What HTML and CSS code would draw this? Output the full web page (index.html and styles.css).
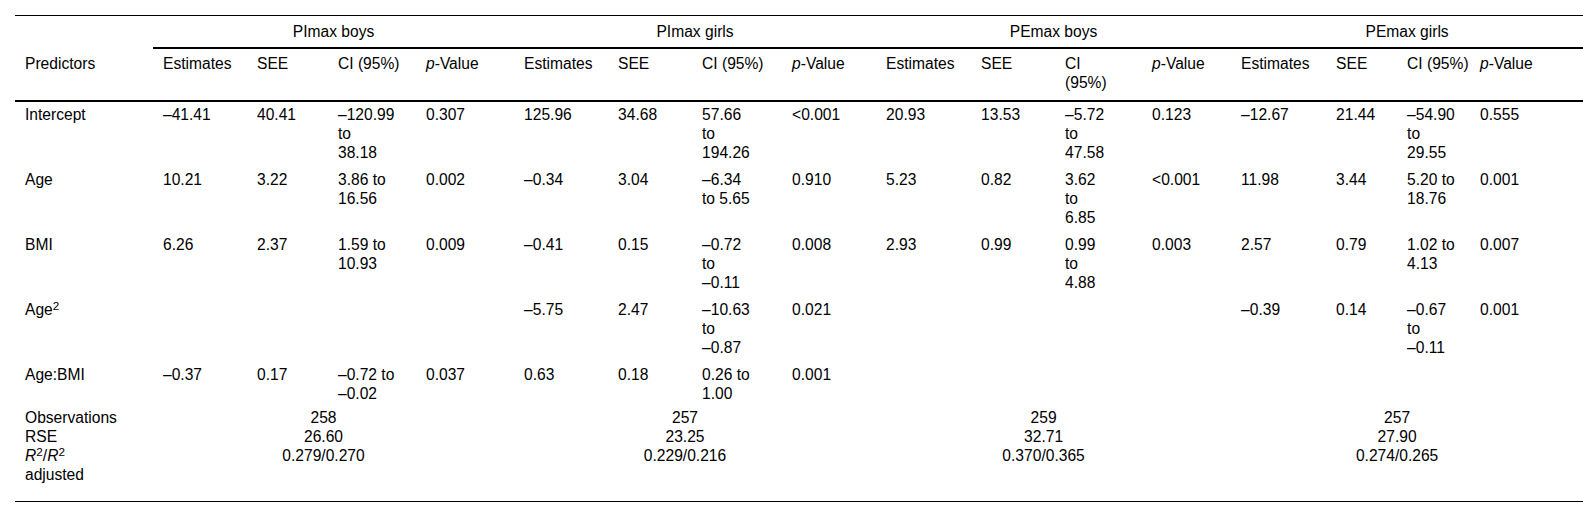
FILE: index.html
```html
<!DOCTYPE html>
<html lang="en">
<head>
<meta charset="utf-8">
<title>Regression table</title>
<link rel="stylesheet" href="styles.css">
</head>
<body>
<div class="page">
<table class="tbl">
<colgroup>
<col class="c138">
<col class="c94"><col class="c81"><col class="c88"><col class="c98">
<col class="c94"><col class="c84"><col class="c90"><col class="c94">
<col class="c95"><col class="c84"><col class="c87"><col class="c89">
<col class="c95"><col class="c71"><col class="c73"><col class="c113">
</colgroup>
<thead>
<tr class="grp">
<th></th>
<th class="grp-h" colspan="4">PImax boys</th>
<th class="grp-h" colspan="4">PImax girls</th>
<th class="grp-h" colspan="4">PEmax boys</th>
<th class="grp-h" colspan="4">PEmax girls</th>
</tr>
<tr class="cols">
<th>Predictors</th>
<th>Estimates</th><th>SEE</th><th>CI (95%)</th><th><i>p</i>-Value</th>
<th>Estimates</th><th>SEE</th><th>CI (95%)</th><th><i>p</i>-Value</th>
<th>Estimates</th><th>SEE</th><th>CI<br>(95%)</th><th><i>p</i>-Value</th>
<th>Estimates</th><th>SEE</th><th>CI (95%)</th><th><i>p</i>-Value</th>
</tr>
</thead>
<tbody>
<tr>
<td>Intercept</td>
<td>–41.41</td><td>40.41</td><td>–120.99<br>to<br>38.18</td><td>0.307</td>
<td>125.96</td><td>34.68</td><td>57.66<br>to<br>194.26</td><td>&lt;0.001</td>
<td>20.93</td><td>13.53</td><td>–5.72<br>to<br>47.58</td><td>0.123</td>
<td>–12.67</td><td>21.44</td><td>–54.90<br>to<br>29.55</td><td>0.555</td>
</tr>
<tr>
<td>Age</td>
<td>10.21</td><td>3.22</td><td>3.86 to<br>16.56</td><td>0.002</td>
<td>–0.34</td><td>3.04</td><td>–6.34<br>to 5.65</td><td>0.910</td>
<td>5.23</td><td>0.82</td><td>3.62<br>to<br>6.85</td><td>&lt;0.001</td>
<td>11.98</td><td>3.44</td><td>5.20 to<br>18.76</td><td>0.001</td>
</tr>
<tr>
<td>BMI</td>
<td>6.26</td><td>2.37</td><td>1.59 to<br>10.93</td><td>0.009</td>
<td>–0.41</td><td>0.15</td><td>–0.72<br>to<br>–0.11</td><td>0.008</td>
<td>2.93</td><td>0.99</td><td>0.99<br>to<br>4.88</td><td>0.003</td>
<td>2.57</td><td>0.79</td><td>1.02 to<br>4.13</td><td>0.007</td>
</tr>
<tr>
<td>Age<sup class="sup">2</sup></td>
<td></td><td></td><td></td><td></td>
<td>–5.75</td><td>2.47</td><td>–10.63<br>to<br>–0.87</td><td>0.021</td>
<td></td><td></td><td></td><td></td>
<td>–0.39</td><td>0.14</td><td>–0.67<br>to<br>–0.11</td><td>0.001</td>
</tr>
<tr>
<td>Age:BMI</td>
<td>–0.37</td><td>0.17</td><td>–0.72 to<br>–0.02</td><td>0.037</td>
<td>0.63</td><td>0.18</td><td>0.26 to<br>1.00</td><td>0.001</td>
<td></td><td></td><td></td><td></td>
<td></td><td></td><td></td><td></td>
</tr>
<tr class="sum sum-first">
<td>Observations</td>
<td class="val" colspan="4">258</td>
<td class="val" colspan="4">257</td>
<td class="val" colspan="4">259</td>
<td class="val" colspan="4">257</td>
</tr>
<tr class="sum">
<td>RSE</td>
<td class="val" colspan="4">26.60</td>
<td class="val" colspan="4">23.25</td>
<td class="val" colspan="4">32.71</td>
<td class="val" colspan="4">27.90</td>
</tr>
<tr class="sum sum-last">
<td><i>R</i><sup class="sup">2</sup>/<i>R</i><sup class="sup">2</sup><br>adjusted</td>
<td class="val" colspan="4">0.279/0.270</td>
<td class="val" colspan="4">0.229/0.216</td>
<td class="val" colspan="4">0.370/0.365</td>
<td class="val" colspan="4">0.274/0.265</td>
</tr>
</tbody>
</table>
</div>
</body>
</html>
```
FILE: styles.css
```css
html, body {
  margin: 0;
  padding: 0;
  background: #fff;
  overflow: hidden;
}
body {
  font-family: "Liberation Sans", Arial, Helvetica, sans-serif;
  font-size: 15.6px;
  line-height: 19px;
  color: #000;
}
.page {
  padding: 15px 0 0 15px;
}
.tbl {
  width: 1568px;
  table-layout: fixed;
  border-collapse: separate;
  border-spacing: 0;
  border-top: 1px solid #000;
  border-bottom: 1px solid #000;
}
.c138 { width: 138px; }
.c113 { width: 113px; }
.c98 { width: 98px; }
.c95 { width: 95px; }
.c94 { width: 94px; }
.c90 { width: 90px; }
.c89 { width: 89px; }
.c88 { width: 88px; }
.c87 { width: 87px; }
.c84 { width: 84px; }
.c81 { width: 81px; }
.c73 { width: 73px; }
.c71 { width: 71px; }

.tbl th,
.tbl td {
  padding: 3px 10px 5px;
  text-align: left;
  vertical-align: top;
  font-weight: normal;
  white-space: nowrap;
}
.tbl .grp th {
  padding: 6px 10px 6px;
  text-align: center;
}
.tbl .grp .grp-h {
  border-bottom: 2px solid #000;
}
.tbl .cols th {
  padding: 5px 10px 8px;
  border-bottom: 2px solid #000;
}
.tbl .sum td {
  padding: 0 30px 0 10px;
}
.tbl .sum td.val {
  text-align: center;
}
.tbl .sum-last td {
  padding-bottom: 17px;
}
.sup {
  font-size: 0.75em;
  line-height: 0;
  vertical-align: 0.42em;
}
```
